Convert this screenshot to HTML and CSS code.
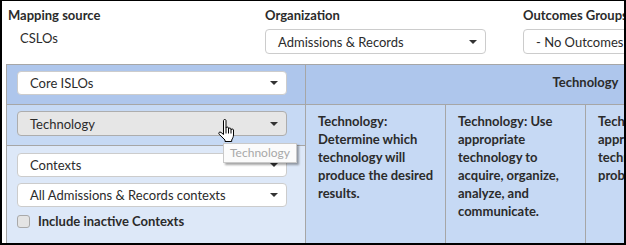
FILE: index.html
```html
<!DOCTYPE html>
<html lang="en">
<head>
    <meta charset="UTF-8">
    <title>Outcomes Mapping</title>
    <link rel="stylesheet" href="styles.css">
</head>
<body>
    <div class="frame">
        <div class="filters">
            <div class="filter">
                <div class="filter-label">Mapping source</div>
                <div class="filter-value">CSLOs</div>
            </div>
            <div class="filter">
                <div class="filter-label">Organization</div>
                <div class="select select-org">Admissions &amp; Records<span class="caret"></span></div>
            </div>
            <div class="filter">
                <div class="filter-label">Outcomes Groups</div>
                <div class="select select-groups">- No Outcomes Groups -<span class="caret"></span></div>
            </div>
        </div>

        <table class="map">
            <colgroup>
                <col class="col-side">
                <col class="col-outcome">
                <col class="col-outcome">
                <col class="col-outcome">
                <col class="col-outcome">
            </colgroup>
            <tr>
                <td class="side side-top">
                    <div class="select">Core ISLOs<span class="caret"></span></div>
                </td>
                <th class="group" colspan="4">Technology</th>
            </tr>
            <tr>
                <td class="side side-mid">
                    <div class="select is-hover">Technology<span class="caret"></span></div>
                    <svg class="cursor" width="19" height="24" viewBox="0 0 19 24">
                        <path d="M6.5 1.5c0-1.3 2.5-1.3 2.5 0V9c0-1.3 2.5-1.3 2.5 0v1c0-1.3 2.5-1.3 2.5 0v1c0-1.3 2.5-1.3 2.5 0v5c0 2-1 3.5-1.8 5v1.5H8v-1.5L2.2 15.3c-1.2-1.3 0.3-3 1.8-1.9L6.5 15.5Z" fill="#fff" stroke="#000" stroke-width="1" stroke-linejoin="round"/>
                        <path d="M9 9v5.5M11.5 10v4.5M14 11v3.5" fill="none" stroke="#000" stroke-width="1"/>
                    </svg>
                    <div class="tooltip">Technology</div>
                </td>
                <td class="outcome" rowspan="2">Technology: Determine which technology will produce the desired results.</td>
                <td class="outcome" rowspan="2">Technology: Use appropriate technology to acquire, organize, analyze, and communicate.</td>
                <td class="outcome" rowspan="2">Technology: Use appropriate technology to solve problems.</td>
                <td class="outcome" rowspan="2">Technology: Apply technology responsibly.</td>
            </tr>
            <tr>
                <td class="side side-bottom">
                    <div class="select">Contexts<span class="caret"></span></div>
                    <div class="select">All Admissions &amp; Records contexts<span class="caret"></span></div>
                    <label class="check">
                        <span class="check-box"></span>
                        Include inactive Contexts
                    </label>
                </td>
            </tr>
        </table>
    </div>
</body>
</html>
```

FILE: styles.css
```css
* {
    box-sizing: border-box;
    margin: 0;
    padding: 0;
}

body {
    font-family: 'Lato', 'Liberation Sans', sans-serif;
    font-size: 13px;
    color: #2b2b2b;
    background-color: #fff;
}

.frame {
    width: 626px;
    height: 245px;
    border: 2px solid #000;
    border-top-width: 1px;
    overflow: hidden;
    background-color: #fff;
}

.filters {
    display: flex;
    padding: 6px 0 0 6px;
    height: 63px;
}

.filter {
    width: 257px;
    flex-shrink: 0;
}

.filter + .filter {
    width: 258px;
}

.filter-label {
    font-weight: bold;
    line-height: 16px;
    margin-bottom: 6px;
    white-space: nowrap;
}

.filter-value {
    padding-left: 12px;
    line-height: 18px;
}

.select {
    display: flex;
    align-items: center;
    justify-content: space-between;
    height: 24px;
    padding: 0 8px 0 12px;
    border: 1px solid #ccc;
    border-radius: 4px;
    background-color: #fff;
    white-space: nowrap;
    overflow: hidden;
}

.select-org {
    width: 221px;
    height: 25px;
}

.select-groups {
    width: 200px;
    height: 25px;
}

.caret {
    width: 0;
    height: 0;
    border-left: 4px solid transparent;
    border-right: 4px solid transparent;
    border-top: 4px solid #333;
    flex-shrink: 0;
    margin-left: 8px;
}

.select.is-hover {
    background-color: #e6e6e6;
    border-color: #adadad;
    height: 25px;
}

.map {
    margin-left: 4px;
    border-collapse: collapse;
    table-layout: fixed;
    width: 859px;
}

.col-side {
    width: 299px;
}

.col-outcome {
    width: 140px;
}

.map td, .map th {
    border: 1px solid #a6a6a6;
    vertical-align: top;
}

.side {
    padding: 6px 18px 0 10px;
}

.side-top {
    height: 40px;
    background-color: #aec6ec;
}

.side-mid {
    position: relative;
    height: 41px;
    background-color: #c6d9f4;
}

.side-bottom {
    height: 100px;
    padding-top: 7px;
    background-color: #dde8f8;
}

.side-bottom .select {
    margin-bottom: 6px;
}

.group {
    background-color: #aec6ec;
    font-weight: bold;
    text-align: center;
    vertical-align: top;
    padding-top: 9px;
    line-height: 16px;
}

.outcome {
    background-color: #c6d9f4;
    font-weight: bold;
    line-height: 18px;
    padding: 7px 5px 8px 12px;
}

.check {
    display: flex;
    align-items: center;
    gap: 8px;
    font-weight: bold;
    margin-top: 3px;
}

.check-box {
    width: 13px;
    height: 13px;
    border: 1px solid #a9a9a9;
    border-radius: 3px;
    background-color: #e4e4e4;
}

.cursor {
    position: absolute;
    left: 210px;
    top: 14px;
}

.tooltip {
    position: absolute;
    left: 216px;
    top: 38px;
    padding: 1px 6px;
    font-size: 12px;
    line-height: 16px;
    color: #a8a8a8;
    background-color: #fbfbfb;
    border: 1px solid #c9c9c9;
    box-shadow: 2px 2px 2px rgba(0, 0, 0, 0.35);
}
```
